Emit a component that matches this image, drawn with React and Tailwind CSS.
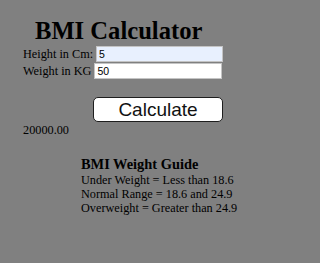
import React, { useState } from "react";

export default function App() {
  const [height, setHeight] = useState("5");
  const [weight, setWeight] = useState("50");

  return (
    <div className="min-h-screen bg-[#808080] text-black font-['Liberation_Serif',serif]">
      <div className="pt-[17px]">
        <h1 className="ml-[35px] text-[24.6px] leading-[28px] font-bold">BMI Calculator</h1>

        <div className="mt-[1px] ml-[23px] flex flex-col gap-[1px] text-[12.25px] leading-[14px]">
          <div className="flex items-baseline gap-[3px]">
            <span>Height in Cm:</span>
            <input
              value={height}
              onChange={(e) => setHeight(e.target.value)}
              className="w-[127px] h-[16px] px-[2px] bg-[#e8f0fe] border border-[#c4c4c4] text-[10.5px] text-black font-['Liberation_Sans',sans-serif] outline-none"
            />
          </div>
          <div className="flex items-baseline gap-[3px]">
            <span>Weight in KG</span>
            <input
              value={weight}
              onChange={(e) => setWeight(e.target.value)}
              className="w-[128px] h-[16px] px-[2px] bg-white border border-[#c4c4c4] text-[10.5px] text-black font-['Liberation_Sans',sans-serif] outline-none"
            />
          </div>
        </div>

        <button className="mt-[18px] ml-[93px] w-[130px] h-[25px] flex items-center justify-center bg-white border-[1.5px] border-[#1e1e1e] rounded-[5px] text-[19px] leading-none text-[#111] font-['Liberation_Sans',sans-serif]">
          Calculate
        </button>

        <p className="mt-[1px] ml-[23px] text-[12.25px] leading-[14px]">20000.00</p>

        <div className="mt-[19px] ml-[81px]">
          <h3 className="text-[14.4px] leading-[16.5px] font-bold">BMI Weight Guide</h3>
          <div className="text-[12.25px] leading-[14.2px]">
            <p>Under Weight = Less than 18.6</p>
            <p>Normal Range = 18.6 and 24.9</p>
            <p>Overweight = Greater than 24.9</p>
          </div>
        </div>
      </div>
    </div>
  );
}
